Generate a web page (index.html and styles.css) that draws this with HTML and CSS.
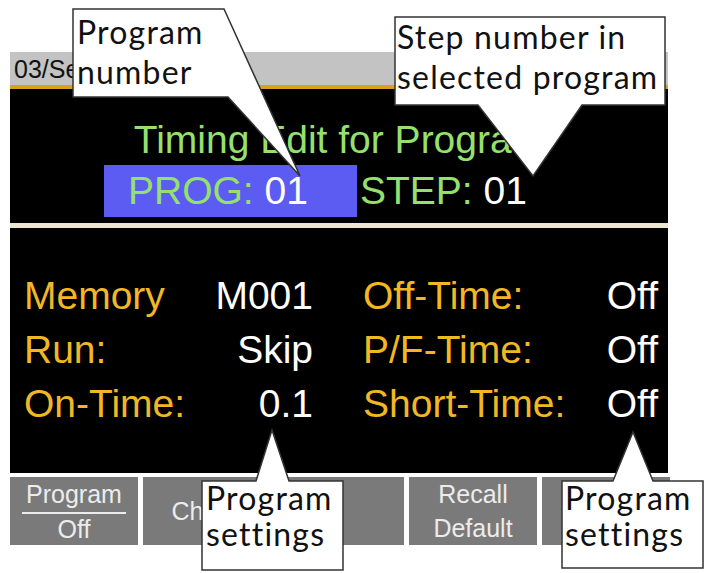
FILE: index.html
```html
<!DOCTYPE html>
<html lang="en">
<head>
    <meta charset="UTF-8">
    <meta name="viewport" content="width=device-width, initial-scale=1.0">
    <title>Timing Edit for Program</title>
    <link rel="stylesheet" href="styles.css">
</head>
<body>
    <div class="page">
        <div class="screen">
            <div class="status-bar">
                <span class="date">03/Sep/2015</span>
            </div>
            <div class="edit-head">
                <div class="title">Timing Edit for Program</div>
                <div class="selectors">
                    <div class="sel sel-active"><span class="key">PROG:</span> <span class="val">01</span></div>
                    <div class="sel"><span class="key">STEP:</span> <span class="val">01</span></div>
                </div>
            </div>
            <div class="params">
                <div class="param-col left">
                    <div class="param"><span class="label">Memory</span><span class="value">M001</span></div>
                    <div class="param"><span class="label">Run:</span><span class="value">Skip</span></div>
                    <div class="param"><span class="label">On-Time:</span><span class="value">0.1</span></div>
                </div>
                <div class="param-col right">
                    <div class="param"><span class="label">Off-Time:</span><span class="value">Off</span></div>
                    <div class="param"><span class="label">P/F-Time:</span><span class="value">Off</span></div>
                    <div class="param"><span class="label">Short-Time:</span><span class="value">Off</span></div>
                </div>
            </div>
        </div>
        <div class="softkeys">
            <div class="softkey">
                <span class="line divided">Program</span>
                <span class="line">Off</span>
            </div>
            <div class="softkey"><span class="line">Check</span></div>
            <div class="softkey"></div>
            <div class="softkey pair">
                <span class="line">Recall</span>
                <span class="line">Default</span>
            </div>
            <div class="softkey pair">
                <span class="line">Recall</span>
                <span class="line">Memory</span>
            </div>
        </div>

        <!-- annotation callouts laid over the screen -->
        <svg class="callout-shapes" width="707" height="573" viewBox="0 0 707 573">
            <polygon points="73,9 224,9 300,176 228,97 73,97"/>
            <polygon points="395,17 665,17 665,105 582,105 533,176 478,105 395,105"/>
            <polygon points="202,481 256,481 272,430 289,481 343,481 343,570 202,570"/>
            <polygon points="562,481 613,481 633,432 653,481 703,481 703,568 562,568"/>
        </svg>
        <div class="callout-text c1">Program<br>number</div>
        <div class="callout-text c2">Step number in<br>selected program</div>
        <div class="callout-text c3">Program<br>settings</div>
        <div class="callout-text c4">Program<br>settings</div>
    </div>
</body>
</html>
```

FILE: styles.css
```css
body {
    margin: 0;
    background-color: white;
    font-family: "Liberation Sans", Arial, sans-serif;
}
.page {
    position: relative;
    width: 707px;
    height: 573px;
    overflow: hidden;
}
.screen {
    margin: 52px 0 0 10px;
    width: 658px;
    background-color: black;
}
.status-bar {
    height: 33px;
    background-color: #c3c3c3;
    border-bottom: 4px solid #d9a21b;
    padding-left: 4px;
    box-sizing: content-box;
}
.date {
    font-family: "Liberation Sans Narrow", "Liberation Sans", sans-serif;
    font-size: 25px;
    line-height: 35px;
    color: #111;
}
.edit-head {
    height: 139px;
    padding-top: 29px;
    box-sizing: border-box;
    border-bottom: 5px solid #ebe5d2;
}
.title {
    text-align: center;
    font-size: 39px;
    line-height: 44px;
    color: #96e06e;
}
.selectors {
    display: flex;
    gap: 3px;
    margin-top: 3px;
    padding-left: 94px;
}
.sel {
    height: 52px;
    font-size: 39px;
    line-height: 52px;
}
.sel-active {
    width: 253px;
    padding-left: 24px;
    box-sizing: border-box;
    background-color: #5c5cf2;
}
.key {
    color: #96e06e;
}
.val {
    color: white;
}
.params {
    display: flex;
    gap: 50px;
    height: 245px;
    padding: 41px 10px 0 14px;
    box-sizing: border-box;
}
.param-col.left {
    width: 289px;
}
.param-col.right {
    flex: 1;
}
.param {
    display: flex;
    justify-content: space-between;
    font-size: 39px;
    line-height: 54px;
}
.label {
    color: #f2b724;
}
.value {
    color: white;
}
.softkeys {
    display: flex;
    gap: 5px;
    margin: 4px 0 0 10px;
}
.softkey {
    width: 128px;
    height: 68px;
    flex-shrink: 0;
    background-color: #7a7a7a;
    color: #ececec;
    font-size: 25px;
    display: flex;
    flex-direction: column;
    align-items: center;
    justify-content: center;
}
.softkey .line {
    line-height: 30px;
}
.softkey .divided {
    width: 104px;
    text-align: center;
    border-bottom: 2px solid #ececec;
    padding-bottom: 3px;
}
.softkey.pair .line {
    line-height: 34px;
}
.callout-shapes {
    position: absolute;
    left: 0;
    top: 0;
}
.callout-shapes polygon {
    fill: white;
    stroke: #333;
    stroke-width: 1.5;
    stroke-linejoin: miter;
}
.callout-text {
    position: absolute;
    font-family: Lato, "Noto Sans", sans-serif;
    font-size: 32px;
    letter-spacing: 1.2px;
    line-height: 40px;
    color: #111;
    white-space: nowrap;
}
.c1 {
    left: 77px;
    top: 12px;
}
.c2 {
    left: 397px;
    top: 17px;
}
.c3 {
    left: 206px;
    top: 480px;
    line-height: 36px;
}
.c4 {
    left: 565px;
    top: 480px;
    line-height: 36px;
}
```
